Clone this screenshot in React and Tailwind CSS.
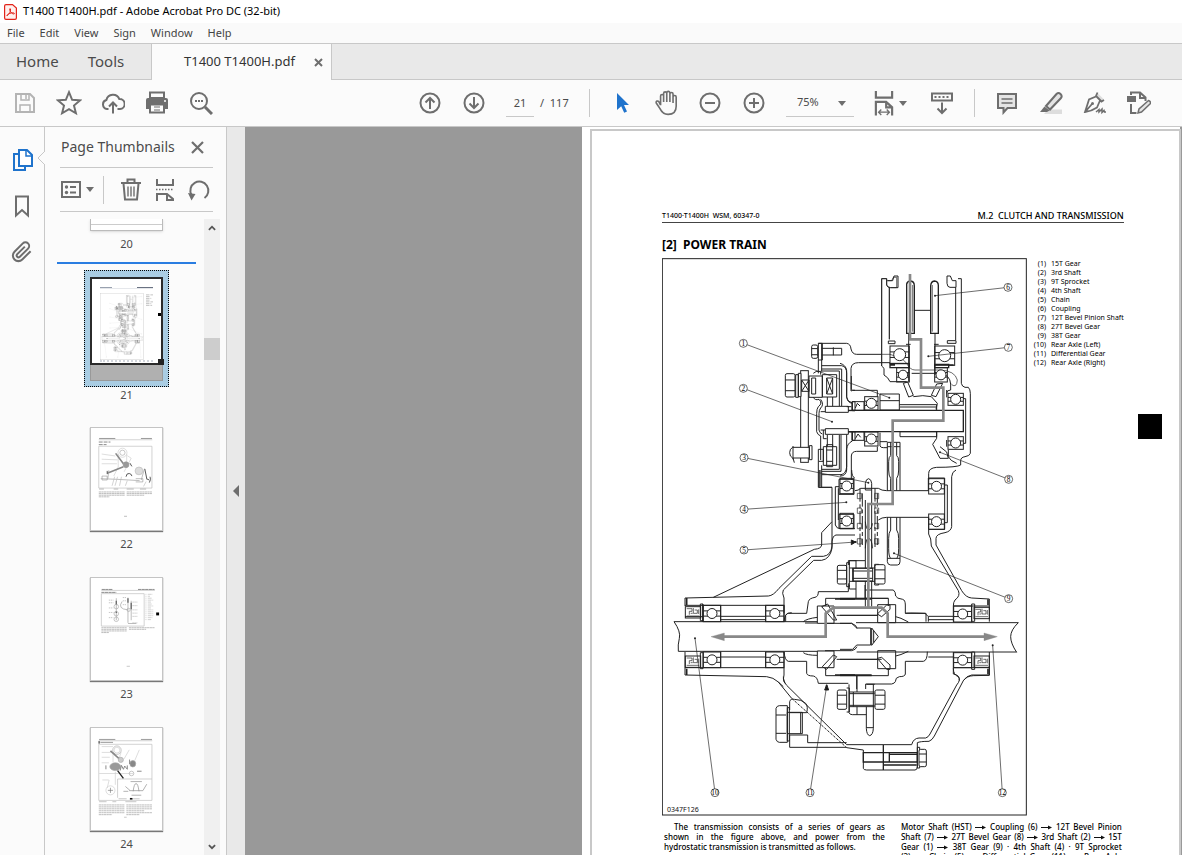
import React, { useState } from "react";

const menus = ["File", "Edit", "View", "Sign", "Window", "Help"];

const legend = [
  "15T Gear",
  "3rd Shaft",
  "9T Sprocket",
  "4th Shaft",
  "Chain",
  "Coupling",
  "12T Bevel Pinion Shaft",
  "27T Bevel Gear",
  "38T Gear",
  "Rear Axle (Left)",
  "Differential Gear",
  "Rear Axle (Right)",
];

const leftText = [
  "The transmission consists of a series of gears as",
  "shown in the figure above, and power from the",
];

// "→" is swapped for the long arrow when rendered
const rightText = [
  "Motor Shaft (HST) → Coupling (6) → 12T Bevel Pinion",
  "Shaft (7) → 27T Bevel Gear (8) → 3rd Shaft (2) → 15T",
  "Gear (1) → 38T Gear (9) · 4th Shaft (4) · 9T Sprocket",
  "(3) → Chain (5) → Differential Gear (11) → Rear Axle",
];

// Number balloons with the point each leader line ends at
const callouts = [
  { n: 1, x: 265, y: 280, tx: 703, ty: 443 },
  { n: 2, x: 265, y: 415, tx: 531, ty: 515 },
  { n: 3, x: 267, y: 623, tx: 640, ty: 698 },
  { n: 4, x: 267, y: 778, tx: 574, ty: 757 },
  { n: 5, x: 267, y: 900, tx: 602, ty: 876 },
  { n: 6, x: 1059, y: 112, tx: 840, ty: 137 },
  { n: 7, x: 1060, y: 292, tx: 820, ty: 319 },
  { n: 8, x: 1061, y: 688, tx: 855, ty: 607 },
  { n: 9, x: 1061, y: 1046, tx: 717, ty: 910 },
  { n: 10, x: 180, y: 1628, tx: 120, ty: 1165 },
  { n: 11, x: 465, y: 1628, tx: 515, ty: 1308 },
  { n: 12, x: 1042, y: 1628, tx: 1013, ty: 1186 },
];

function Icon({ size = 24, children }) {
  return (
    <svg width={size} height={size} viewBox="0 0 24 24" fill="none" stroke="#6e6e6e" strokeWidth="2" aria-hidden="true">
      {children}
    </svg>
  );
}

function ToolButton({ label, children, className = "w-11" }) {
  return (
    <button aria-label={label} className={`flex h-11 shrink-0 items-center justify-center ${className}`}>
      {children}
    </button>
  );
}

function Caret() {
  return (
    <svg width="8" height="5" viewBox="0 0 8 5" fill="#6e6e6e" aria-hidden="true">
      <path d="M0 0h8L4 5z" />
    </svg>
  );
}

function Arrow() {
  return (
    <svg className="inline-block align-middle" width="11" height="5" viewBox="0 0 11 5" aria-hidden="true">
      <path d="M0 2.5h9" stroke="#111" />
      <path d="M7 .5l4 2-4 2z" fill="#111" />
    </svg>
  );
}

function Bearing({ x, y, w = 46, h = 48, r = 15 }) {
  return (
    <g>
      <rect x={x} y={y} width={w} height={h} />
      <path d={`M${x} ${y + h * 0.34}h${w}M${x} ${y + h * 0.66}h${w}`} />
      <circle cx={x + w / 2} cy={y + h / 2} r={r} fill="#fff" />
    </g>
  );
}

function HexHead({ x, y, w = 28, h = 60 }) {
  return (
    <g fill="#fff">
      <rect x={x} y={y} width={w} height={h} rx="5" />
      <path d={`M${x} ${y + h * 0.27}h${w}M${x} ${y + h * 0.73}h${w}`} />
    </g>
  );
}

function Seal({ x, y }) {
  return (
    <g>
      <rect x={x} y={y} width="46" height="34" />
      <path
        d={`M${x + 4} ${y + 6}h16v8h-8v10M${x + 24} ${y + 4}v16h12v-10h-8M${x + 4} ${y + 28}h38M${x + 16} ${y + 20}h6M${x + 40} ${y + 8}v14`}
        strokeWidth="2"
      />
    </g>
  );
}

function PowerTrain({ className, thin }) {
  return (
    <svg
      className={className}
      viewBox="21 24 1098 1674"
      fill="none"
      stroke="#222"
      strokeWidth={thin ? 6 : 3}
      strokeOpacity={thin ? 0.45 : 1}
      role="img"
      aria-label="Power train section"
    >
      <rect x="22" y="26" width="1092" height="1669" />

      {/* clutch lever and brake, upper left */}
      <path d="M490 280H575Q587 282 588 297Q592 313 605 313H680" />
      <path d="M490 280V370M500 280V365M500 347H560Q575 350 575 370V440Q577 458 592 460V482H600" />
      <path d="M500 357H560V468M500 363H553V468" />
      <path d="M588 423V355Q590 338 610 338H705M588 423Q590 421 600 421" />
      <HexHead x={470} y={285} w={18} h={40} />
      <path d="M490 280h12v50h-12M500 295h60v20h-60M535 292v24" />
      <rect x="437" y="362" width="23" height="275" fill="#fff" />
      <HexHead x={391} y={371} w={29} h={70} />
      <path d="M422 374h8v68h-8zM430 370h8v70h-8z" fill="#fff" />
      <path d="M440 390h22v34h-22zl22 34M462 390l-22 34" />
      <path d="M462 378h40v64h-40zM470 384h12v48h-12zM502 374h43v67h-43zM515 384h18v48h-18zl18 48M533 384l-18 48M517 441v29M533 441v29" />
      <path d="M475 370q6-8 22-6v10M475 442q5 10 17 6Q504 460 490 470Q485 476 485 490V545Q488 555 497 558V630M497 448Q508 464 497 474Q492 480 492 490V540Q494 550 502 552" />
      <path d="M511 469h69v18h-69zM511 536h69v17h-69z" fill="#fff" />
      <path d="M580 482H600M497 485H511M497 540H511M505 540v26h10M580 546H592V573Q577 580 575 597V650Q573 672 558 674H500M500 664H558V555M553 555V658H500" />
      <path d="M517 555V590M533 555V590M490 598h15v36h-15zM505 590h40v56h-40zM515 584h18v66h-18zM515 600h18M515 634h18" />
      <path d="M490 634V712H531M500 646V712" />
      <path d="M495 660V710" stroke="#777" strokeWidth="6" />
      <path d="M413 592h50v32h-50q-9-4-9-16t9-16zM463 587h8v42h-8zM414 624l4 14" fill="#fff" />
      <path d="M414 588v40" />
      <path d="M592 455h8v26h-8zM592 545h8v26h-8z" />

      {/* coupling, bevel pinion and 3rd shaft */}
      <g transform="translate(555 0)">
        <path d="M125 348V86H140V105Q142 113 152 113H170V82H160L155 92H142M148 113V268M125 313H150L185 325L200 340Q210 360 225 360H300Q345 362 352 390Q350 415 335 404" strokeWidth="2" />
        <path d="M125 348V86H140V105Q142 113 152 113H174V78H162L158 92H142M148 113V268M125 348L132 355V375Q145 382 150 395H200M215 370H300Q330 374 332 402" />
        <path d="M321 78H331L337 92H348V112H330Q322 112 321 100zM347 112V270M354 86H364V400Q366 410 375 412H385Q391 418 391 430V610Q389 618 375 620Q362 622 362 632V645Q352 652 290 652Q266 654 266 670V690" />
        <path d="M200 102Q202 93 212 93Q223 94 223 108V250H200zM272 250V108Q273 94 283 93Q295 94 295 106V250z" fill="#fff" strokeWidth="4" />
        <path d="M218 105V245M277 105V245" strokeWidth="2" />
        <path d="M223 181H272M206 250V395M285 250V375M145 273h20v8h-20zM322 272h26v8h-26zM198 283h14M282 283h14" />
        <Bearing x={150} y={288} w={58} h={52} r={18} />
        <Bearing x={284} y={288} w={60} h={58} r={18} />
        <path d="M150 341h58v12h-58zM284 343h42v10h-42zM150 345h15M326 345h15" strokeWidth="4" />
        <Bearing x={170} y={353} w={38} h={43} r={14} />
        <Bearing x={284} y={353} w={38} h={43} r={15} />
        <path d="M190 400L203 396L220 436L206 441zM290 402L308 400L288 440L274 436zM220 440Q250 434 274 440L292 460L288 478" />
        <path d="M120 432H178V480H120zM120 452H178M178 464H290V480M180 471H290" />
        <path d="M34 378V418Q35 421 45 421H112V440M20 470H34M0 340Q18 345 20 362V442Q22 456 36 458" />
        <Bearing x={74} y={440} w={40} h={40} />
        <Bearing x={74} y={546} w={40} h={42} />
        <path d="M36 455h36v26h-36zM36 546h36v25h-36zM46 474l6-14l8 8M46 566l8-14l8 10" />
        <path d="M24 481H370V545H24" strokeWidth="4" />
        <Bearing x={324} y={430} w={46} h={36} />
        <Bearing x={324} y={560} w={46} h={38} />
        <path d="M320 420v22M320 590v-20M369 446h8v134h-8M320 430q0-10 12-10v-20" />
        <path d="M180 545H290V560H180zM290 545V565L278 583L300 625H325L320 606L300 590M325 600V620Q330 632 350 640" />
        <path d="M120 548V588Q122 593 130 593H142M120 575H142M34 690V618Q35 604 50 604H112V590" />
        <path d="M142 722V577H180V722M142 590h38M152 617Q146 620 146 635V660Q146 678 152 685V722M170 617Q176 620 176 635V660Q176 678 170 685V722M152 577V617M170 577V617" />
        <path d="M142 802V935Q143 945 152 945H172Q180 945 180 935V802M142 925H180M152 802V840Q146 848 146 865V895Q146 920 152 925M170 802V840Q176 848 176 865V895Q176 920 170 925" />
        <path d="M20 554V660Q18 678 0 678" />
      </g>

      {/* case wall and left axle */}
      <g transform="translate(0 660)">
        <path d="M492 0V52H531V155L500 188V225Q499 236 478 238L175 382" />
        <path d="M531 155V228Q528 256 505 259H470L372 355Q355 377 340 378L90 384V408M600 195H543Q533 197 531 215V235Q525 267 500 271H476L385 360Q380 368 387 384V430" />
        <path d="M600 25Q590 20 590 0M541 50V165Q545 176 555 176H600M541 50H552M550 55V150" />
        <path d="M552 28h45v45h-45zM552 133h45v42h-45z" />
        <path d="M57 455Q78 485 73 505T70 544M57 455H510M70 544H510" />
        <path d="M90 406H387V455M90 440H145M143 402V455M197 406V455M197 439H332M332 406V455M197 449H332M90 593H387V546M197 546V593M197 561H332M332 546V593M90 546V615L335 620Q355 622 370 636L385 650M387 593V615Q382 625 390 640" />
        <path d="M95 384V405M95 596V615" strokeWidth="5" />
        <path d="M136 402h8v50h-8zM136 548h8v48h-8z" />
        <Bearing x={145} y={406} w={52} h={49} />
        <Bearing x={332} y={406} w={55} h={49} />
        <Bearing x={145} y={546} w={52} h={47} />
        <Bearing x={332} y={546} w={55} h={47} />
        <Seal x={91} y={410} />
        <Seal x={91} y={558} />
        <path d="M387 455Q390 430 400 430H455L460 395Q462 385 480 382Q490 380 490 365H580V340M392 455V436Q395 428 410 428M387 546Q390 572 400 574H455V610Q457 618 475 618Q487 620 490 640H580" />
        <path d="M445 455Q455 446 487 442M450 459L487 459M445 548Q455 556 487 556" />
        <path d="M487 408h50v52h-50zM487 543h50v50h-50zM512 408V385H650M500 410L535 450H545L518 402zM502 590L535 555L545 560L515 598zM512 595V617H650" fill="#fff" />
        <path d="M540 387H600M540 615H600" strokeWidth="5" />
        <path d="M545 436H680M510 460H590Q606 466 606 475M545 568H680" />
        <path d="M606 530Q602 540 590 542H510" />
      </g>

      {/* chain, 4th shaft and right axle */}
      <g transform="translate(555 660)">
        <path d="M45 62Q55 62 62 55H115Q125 62 140 62H265V24H314V178H266V142H140Q125 142 115 150" />
        <path d="M60 55V238M67 70V225M105 55V238M112 70V225" strokeDasharray="40 8 12 8" />
        <path d="M52 70h12v16h-12zM104 70h12v16h-12zM52 114h12v16h-12zM104 114h12v16h-12zM52 160h12v16h-12zM104 160h12v16h-12zM52 206h12v16h-12zM104 206h12v16h-12z" strokeWidth="2" />
        <path d="M76 60V40Q78 26 86 26Q94 28 95 40V90M76 60H95M76 155Q78 178 86 180Q95 178 97 160M76 235Q77 205 86 205Q96 207 97 235M76 90V410M95 90V410" />
        <Bearing x={0} y={25} w={40} h={46} />
        <Bearing x={0} y={130} w={40} h={46} />
        <Bearing x={266} y={26} w={47} h={46} />
        <Bearing x={266} y={132} w={47} h={46} />
        <path d="M314 45H322V158H314M348 0Q336 5 335 20V170Q333 184 315 188Q288 192 288 205V225L365 362Q378 383 395 384L448 387V408M266 178V192Q274 204 274 228L355 362Q362 378 345 390Q340 396 340 408" />
        <path d="M48 270V385M25 285V272H75M75 345V385H145M75 360H160Q167 365 167 378Q170 386 188 388Q196 390 196 405V430H258V455" />
        <rect x="38" y="295" width="60" height="38" fill="#fff" />
        <path d="M38 303H98M38 325H98" />
        <path d="M113 404h54v54h-54zM113 542h54v54h-54zM112 432L140 405H150V418L125 440zM112 565L140 598H150V585L125 562z" fill="#fff" />
        <path d="M196 430Q200 428 255 430L265 440V455M196 574H250Q262 572 262 545M167 440Q180 442 205 456M167 558Q180 556 205 544M265 439H340M265 449H340M265 561H340M0 385H145V408M0 617H145V595M0 436H112M0 568H112" />
        <path d="M0 387H95M0 615H95" strokeWidth="5" />
        <path d="M0 460H35L50 474H92V525H50L38 538H0M95 474L115 500L95 526zM101 482V518" />
        <path d="M48 458H535M50 546H530M535 458Q512 480 512 500T530 547" />
        <path d="M340 408H448V455M340 408V455M340 593H448M340 546V593M395 402h9v52h-9zM395 546h9v52h-9zM448 546V615H395Q380 617 370 632M340 593V612Q360 615 358 632" />
        <path d="M444 388V405M444 596V613" strokeWidth="5" />
        <Bearing x={341} y={408} w={54} h={48} />
        <Bearing x={341} y={548} w={54} h={45} />
        <Seal x={402} y={412} />
        <Seal x={402} y={558} />
        <path d="M196 574V612Q195 620 178 620Q166 622 166 635Q164 640 155 642H77V657M50 617V657" />
      </g>

      {/* bolts through the differential case */}
      <HexHead x={547} y={946} w={28} h={56} />
      <path d="M575 938h8v72h-8zM583 945v-13h20M583 1005v12h20M583 954h76M583 994h76M595 954v40M659 943h12v62h-12z" />
      <HexHead x={660} y={944} w={30} h={58} />
      <HexHead x={547} y={1320} w={28} h={58} />
      <path d="M575 1314h8v72h-8M583 1326h76M583 1331h76M583 1366h76M583 1370h76M595 1326v44M582 1303v85q2 6 10 6h42M606 1277v49M606 1370v24M634 1303h25" />
      <path d="M634 1370V1435Q635 1455 644 1457Q654 1455 655 1435V1303M634 1433h21" />
      <HexHead x={660} y={1320} w={30} h={58} />

      {/* drain plug and lower case */}
      <g transform="translate(0 1230)">
        <path d="M385 50Q383 65 395 76L575 254H770Q775 235 792 234H812Q820 232 825 222L905 75Q918 60 910 50Q895 45 895 25" />
        <path d="M370 66L410 115M575 263L625 270V325Q626 330 635 330H780Q787 330 787 320V248Q795 244 822 244Q832 240 838 228L925 62Q935 48 955 47L1003 46V20" />
        <path d="M410 115L575 263" strokeDasharray="8 4" />
        <path d="M404 262H575M404 262V225M404 150V125Q406 115 418 118Q440 118 452 130Q460 140 455 158H404M458 225V248H575M404 225H458" />
        <path d="M363 145q3-8 10-8h24v110h-24q-7 0-10-9zM363 165h30M363 220h30M397 143h6v100h-6zM397 157h45v64h-45zM437 157v64" />
        <path d="M625 278h78v28h-78zM685 255v75M703 278h84v28h-84zM703 283h84M685 315h100" strokeWidth="4" />
        <path d="M787 262h7v62h-7z" />
        <HexHead x={792} y={268} w={22} h={52} />
      </g>

      {/* power flow */}
      <g stroke="#888" strokeWidth="8">
        <path d="M765 72V268H798V413H865V512H713V762H640V1073" />
        <path d="M205 1160H512V1090L535 1073H680L698 1090V1160H990" />
        <path d="M168 1160L208 1149V1172zM1027 1160L987 1149V1172z" fill="#888" strokeWidth="1" />
      </g>
      <path d="M602 876l-13-6v14zM515 1304l-6 16h12z" fill="#111" />

      {callouts.map((c) => (
        <g key={c.n}>
          <path d={`M${c.x} ${c.y}L${c.tx} ${c.ty}`} strokeWidth="2" />
          <circle cx={c.tx} cy={c.ty} r="3" fill="#222" stroke="none" />
          <circle cx={c.x} cy={c.y} r="12" fill="#fff" strokeWidth="2" />
          {!thin && (
            <text
              x={c.x}
              y={c.y + 8}
              textAnchor="middle"
              fontSize="22"
              fontFamily="Liberation Serif, serif"
              fill="#000"
              stroke="none"
            >
              {c.n}
            </text>
          )}
        </g>
      ))}
      {!thin && (
        <text x="36" y="1686" fontSize="21" fontFamily="Noto Sans, sans-serif" fill="#111" stroke="none">
          0347F126
        </text>
      )}
    </svg>
  );
}

// Miniature pages
function Mini21() {
  return (
    <div className="relative h-full w-full">
      <div className="flex h-[88px] flex-col border-2 border-[#2b2b2b] bg-white px-2 pt-2">
        <div className="flex justify-between border-b border-gray-200">
          <span className="h-px w-3 bg-gray-400" />
          <span className="h-px w-4 bg-gray-500" />
        </div>
        <div className="flex gap-0.5 pt-1">
          <PowerTrain thin className="h-[67px] w-11 shrink-0" />
          <svg className="h-4 w-2" viewBox="0 0 8 16" stroke="#bbb" strokeDasharray="4 1" aria-hidden="true">
            <path d="M0 1h8M0 3h5M0 5h6M0 7h4M0 9h8M0 11h6M0 13h7" />
          </svg>
        </div>
        <div className="h-0.5 border-t-2 border-dotted border-gray-300" />
      </div>
      <div className="h-4 border border-t-0 border-[#999] bg-[#b0b0b0]" />
      <span className="absolute top-9 right-0.5 h-[3px] w-[3px] bg-black" />
      <span className="absolute -right-px bottom-[15px] h-1.5 w-1.5 bg-[#222]" />
    </div>
  );
}

function Mini22() {
  return (
    <svg className="h-full w-full" viewBox="270 81 219 312" fill="none" stroke="#999" strokeWidth="2" aria-hidden="true">
      <path d="M295 112H345M424 112H458" stroke="#999" strokeWidth="3" />
      <path d="M294 116H459M294 136H458V265H294z" stroke="#bbb" />
      <path d="M294 123H330M294 131H318" stroke="#888" strokeWidth="3" strokeDasharray="12 3" />
      <circle cx="367" cy="156" r="14" stroke="#ccc" />
      <circle cx="367" cy="156" r="8" stroke="#aaa" />
      <path d="M354 160V200L340 228M380 160V190M382 165L394 173L372 215M303 160L345 166M303 176L352 178M303 190H350" stroke="#ccc" />
      <path d="M346 158L370 190M320 219L370 199" stroke="#888" strokeWidth="5" />
      <circle cx="378" cy="193" r="9" fill="#999" />
      <path d="M300 236L350 238L420 242M304 228h16v12h-16zM408 236h22v10h-22M325 210L322 236M435 205L425 240" />
      <circle cx="418" cy="212" r="12" fill="#ddd" stroke="#bbb" />
      <path d="M320 212v10M390 188l6 10M378 230q2-12 10-10t8 8M436 206l6 30M452 230q4 8-2 18M440 236l10 4" stroke="#555" strokeWidth="3" />
      <path d="M343 230l-8 28M352 230l-8 28M364 230l-6 28M382 242l-6 16M440 245l-8 15" stroke="#bbb" />
      <path d="M295 268H310M340 268H354M380 268H402M421 268H440" />
      <path d="M294 277H375M294 282H375M294 287H375M294 292H327M380 277H458M380 282H458M380 287H434" strokeDasharray="7 1" />
      <path d="M372 352H381" />
    </svg>
  );
}

function Mini23() {
  return (
    <svg className="h-full w-full" viewBox="270 531 219 312" fill="none" stroke="#aaa" strokeWidth="2" aria-hidden="true">
      <path d="M303 565H337M415 565H466M302 574H348" stroke="#888" strokeWidth="3" strokeDasharray="10 1" />
      <path d="M302 568H467M302 578H434V678H302z" stroke="#bbb" />
      <path d="M348 592V660M384 590V668M366 602Q350 625 384 628M394 600V660M384 670H410" stroke="#999" />
      <path d="M348 600V612M384 592V606M348 632v6M394 606v20" stroke="#666" strokeWidth="4" />
      <circle cx="348" cy="618" r="7" />
      <circle cx="348" cy="640" r="7" />
      <circle cx="348" cy="657" r="7" />
      <circle cx="386" cy="628" r="5" />
      <path d="M325 598h14M325 606h14M325 622h14M325 636h14M325 652h14M368 590h12M368 600h12M368 612h12M398 604h15M398 615h15M398 628h15M398 638h15M398 648h15M398 668h15" strokeDasharray="4 2" />
      <path d="M438 580H460M438 586H452M438 592H458M438 598H462M438 604H455M438 610H458M438 616H462M438 622H455M438 628H464M438 634H464M438 640H462M438 646H466M438 652H460M438 658H455" strokeDasharray="3 4 12 2" stroke="#bbb" />
      <path d="M302 683H380M302 688H380M302 693H380M302 698H325M387 683H466M387 688H440" strokeDasharray="7 1" stroke="#999" />
      <path d="M471 636h9v9h-9z" fill="#000" stroke="none" />
      <path d="M380 802H390" />
    </svg>
  );
}

function Mini24() {
  return (
    <svg className="h-full w-full" viewBox="270 306 219 312" fill="none" stroke="#aaa" strokeWidth="2" aria-hidden="true">
      <path d="M295 340H345M424 340H458M299 349H338" stroke="#999" strokeWidth="3" />
      <path d="M295 345V353" stroke="#111" strokeWidth="3" />
      <path d="M294 344H459M294 355H458V528H294zM352 462H458M352 462V520" stroke="#bbb" />
      <circle cx="350" cy="373" r="13" />
      <circle cx="350" cy="373" r="9" stroke="#ccc" />
      <path d="M338 380V410M363 378L355 405M388 372L372 400M419 372L405 405M303 362h35M303 380h28M303 395h25M303 412h22M295 445H400M326 465L320 490M345 440V480M305 465H325" stroke="#ccc" />
      <path d="M330 375L360 402" stroke="#888" strokeWidth="5" />
      <circle cx="362" cy="403" r="8" fill="#ccc" />
      <ellipse cx="345" cy="424" rx="17" ry="12" fill="#999" />
      <ellipse cx="399" cy="415" rx="9" ry="10" fill="#888" />
      <path d="M360 436l4-16l6 12l4-10l8 10v-12M316 420v12M389 402v14M412 438h14" stroke="#888" strokeWidth="3" />
      <path d="M352 436L370 460" stroke="#222" strokeWidth="4" />
      <circle cx="395" cy="445" r="7" />
      <circle cx="330" cy="497" r="14" stroke="#ccc" />
      <path d="M322 497h16M330 489v16" stroke="#777" />
      <path d="M400 500Q403 476 409 476T418 500M388 498H430M376 485L390 497M442 478L430 498M392 470H427M395 512H425M370 500H385" stroke="#888" />
      <path d="M390 523h8" stroke="#111" strokeWidth="5" />
      <path d="M355 523h25M400 523h20M295 532H318M336 532H348M376 532H410" />
      <path d="M294 542H373M294 548H373M294 554H373M294 560H373M294 566H373M294 572H335M379 542H458M379 548H458M379 554H458M379 560H435M379 566H458M379 572H420" strokeDasharray="7 1" stroke="#999" />
      <path d="M372 580H380" />
    </svg>
  );
}

const pages = [
  { n: 22, Mini: Mini22 },
  { n: 23, Mini: Mini23 },
  { n: 24, Mini: Mini24 },
];

function TopBars() {
  return (
    <header className="shrink-0">
      <div className="flex h-[23px] items-center gap-1.5 bg-white pl-1 text-[11px] text-black">
        <svg width="13" height="16" viewBox="0 0 13 16" fill="none" stroke="#e2231a" aria-hidden="true">
          <path d="M2 .6h6.5L12.4 4v10q0 1.4-1.4 1.4H2Q.6 15.400.6 14V2Q.6.6 2 .6z" fill="#fff0ee" strokeWidth="1.2" />
          <path d="M3 11.500c2-1 4-4 3.500-6.500c-.5-1-1.200 0-.6 1.500c.7 2 2.500 3.500 4 3.500c1 0 .6-1.200-1-1.200c-2 0-4.500 1-5.600 2.200c-.6.8-.6 1-.3.5z" />
        </svg>
        <h1>T1400 T1400H.pdf - Adobe Acrobat Pro DC (32-bit)</h1>
      </div>
      <nav aria-label="Menu" className="flex h-5 items-center gap-[15px] bg-[#fafafa] pl-[7px] text-[11px] text-[#444]">
        {menus.map((m) => (
          <button key={m}>{m}</button>
        ))}
      </nav>
      <div className="flex h-[37px] border-t border-[#c8c8c8] bg-[#e9e9e9] text-[#4b4b4b]">
        <div className="flex w-[151px] items-center gap-[29px] border-b border-[#c8c8c8] pl-4 text-[15px]">
          <button>Home</button>
          <button>Tools</button>
        </div>
        <div className="flex w-[181px] items-center justify-between border-x border-[#c8c8c8] bg-[#fbfbfb] pr-2 pl-8 text-[13px] text-[#333]">
          <span>T1400 T1400H.pdf</span>
          <button aria-label="Close tab">
            <svg width="9" height="9" viewBox="0 0 9 9" stroke="#6e6e6e" strokeWidth="2" aria-hidden="true">
              <path d="M1 1l7 7M8 1L1 8" />
            </svg>
          </button>
        </div>
        <div className="flex-1 border-b border-[#c8c8c8]" />
      </div>
    </header>
  );
}

function Toolbar() {
  const [page, setPage] = useState("21");
  const [zoom, setZoom] = useState("75%");

  return (
    <div className="flex h-[47px] shrink-0 items-center border-b border-[#c8c8c8] bg-[#fbfbfb] pr-[21px] pl-[3px] text-xs text-[#4b4b4b]">
      <ToolButton label="Save">
        <Icon>
          <path d="M3 3h14l4 4v14H3z" stroke="#b4b4b4" />
          <path d="M8 3v6h8V3M13 4v4M7 21v-7h10v7" stroke="#b4b4b4" strokeWidth="1.5" />
        </Icon>
      </ToolButton>
      <ToolButton label="Star">
        <Icon size={26}>
          <path d="M12 2l2.900 7 7.400.5-5.700 4.800 1.800 7.200L12 17.600l-6.400 3.900 1.800-7.200L1.700 9.500 9.100 9z" strokeWidth="1.8" />
        </Icon>
      </ToolButton>
      <ToolButton label="Share">
        <Icon>
          <path d="M7.500 18H6a4.600 4.600 0 0 1-.6-9A6.800 6.800 0 0 1 18.300 8a5 5 0 0 1 .7 10h-2.500M12 22.500V12M8 15.500l4-4 4 4" />
        </Icon>
      </ToolButton>
      <ToolButton label="Print">
        <Icon>
          <path d="M5 1.500h14V7H5z" fill="#fbfbfb" />
          <path d="M3 7h18q2 0 2 2v9H1V9q0-2 2-2z" fill="#6e6e6e" stroke="none" />
          <path d="M5 13.500h14v8H5z" fill="#fbfbfb" />
          <path d="M9 16h6M9 19h6" strokeWidth="1.2" />
          <path d="M19 10h2" stroke="#fff" strokeWidth="1.5" />
        </Icon>
      </ToolButton>
      <ToolButton label="Find">
        <Icon>
          <circle cx="10" cy="10" r="8" />
          <path d="M16 16l7 7" strokeWidth="3" />
          <path d="M6 10h8" strokeDasharray="2 1" />
        </Icon>
      </ToolButton>
      <div className="flex-1" />
      <ToolButton label="Previous page">
        <Icon>
          <circle cx="12" cy="12" r="9.5" />
          <path d="M12 18V7M7.500 11.500L12 7l4.500 4.500" />
        </Icon>
      </ToolButton>
      <ToolButton label="Next page">
        <Icon>
          <circle cx="12" cy="12" r="9.5" />
          <path d="M12 6v11M7.500 12.500L12 17l4.500-4.500" />
        </Icon>
      </ToolButton>
      <input
        aria-label="Page number"
        value={page}
        onChange={(e) => setPage(e.target.value)}
        className="ml-2.5 h-7 w-7 border-b border-[#c8c8c8] bg-transparent text-center text-[11px] outline-none"
      />
      <span className="ml-1.5 w-[49px] text-[11px] whitespace-pre">/  117</span>
      <div className="h-7 w-px bg-[#c8c8c8]" />
      <ToolButton label="Select" className="ml-2.5 w-11">
        <Icon>
          <path d="M7 2l12 12h-5l3 6.500-2.800 1.200-3-6.500L7 19z" fill="#1f73cc" stroke="none" />
        </Icon>
      </ToolButton>
      <ToolButton label="Hand">
        <Icon size={26}>
          <path
            d="M7 14V5.500a1.400 1.400 0 0 1 2.800 0V11M9.800 11V3.200a1.400 1.400 0 0 1 2.900 0V11M12.700 10V2.700a1.400 1.400 0 0 1 2.900 0V11M15.600 10V3.700a1.400 1.400 0 0 1 2.900 0V12M18.500 11V6.500a1.400 1.400 0 0 1 2.900 0V15c0 5-3 7.500-7.500 7.500c-4 0-5.900-2-7.600-5.500L3 12c-.7-1.800 1.500-2.500 2.500-1L7 14"
            strokeWidth="1.5"
          />
        </Icon>
      </ToolButton>
      <ToolButton label="Zoom out">
        <Icon>
          <circle cx="12" cy="12" r="9.5" />
          <path d="M7 12h10" />
        </Icon>
      </ToolButton>
      <ToolButton label="Zoom in">
        <Icon>
          <circle cx="12" cy="12" r="9.5" />
          <path d="M7 12h10M12 7v10" />
        </Icon>
      </ToolButton>
      <div className="relative ml-2.5 flex items-center">
        <select
          aria-label="Zoom"
          value={zoom}
          onChange={(e) => setZoom(e.target.value)}
          className="h-7 w-[68px] appearance-none border-b border-[#c8c8c8] bg-transparent pl-[11px] text-[11px] outline-none"
        >
          <option>75%</option>
          <option>100%</option>
        </select>
        <span className="pointer-events-none absolute right-2">
          <Caret />
        </span>
      </div>
      <ToolButton label="Fit width" className="ml-2.5 w-[50px] gap-0.5">
        <Icon size={26}>
          <path d="M4.500 1v6h15V1M4.500 23.500V11H14l5.500 5v7.500M14 11v5h5.500" />
          <path d="M7 20.500h10M9.500 18L7 20.500 9.500 23M14.500 18l2.500 2.500-2.500 2.500" strokeWidth="1.2" />
        </Icon>
        <Caret />
      </ToolButton>
      <ToolButton label="Scrolling" className="ml-1.5 w-11">
        <Icon>
          <path d="M2 2.500h20v7H2z" />
          <path d="M4.500 6h15" strokeDasharray="2 2" />
          <path d="M12 11.500V22M7.500 17.500L12 22l4.500-4.500" />
        </Icon>
      </ToolButton>
      <div className="ml-2.5 h-7 w-px bg-[#c8c8c8]" />
      <ToolButton label="Comment" className="ml-2.5 w-11">
        <Icon>
          <path d="M3 3h18v14h-8.500L8.500 21.500V17H3z" fill="#e4e4e4" />
          <path d="M6.500 8h11M6.500 12h11" strokeWidth="1.5" />
        </Icon>
      </ToolButton>
      <ToolButton label="Highlight">
        <Icon>
          <path d="M9 18.500h14v4.500H5z" fill="#ddd" stroke="none" />
          <path d="M7 15L17.500 3q2-2 4 0t.5 4L11 18.500z" fill="#e4e4e4" />
          <path d="M5.500 15.500l5 4-2.500 1.500H1z" fill="#6e6e6e" stroke="none" />
        </Icon>
      </ToolButton>
      <ToolButton label="Sign">
        <Icon>
          <path d="M14.500 2l6.500 6.500-4 2-4-5z" fill="#ddd" stroke="none" />
          <path d="M14.500 1.500L13 5l5.500 5.500L21 9M13 5.500L6 8.500Q4 15 2 21q6-.5 12-4.500l3-7M2 21l7-8" strokeWidth="1.8" />
          <circle cx="9.5" cy="12.5" r="1.5" fill="#6e6e6e" stroke="none" />
          <path d="M13 21l3-2.500v2.500l3-3v3.500l2-2 .5 1.500H23" strokeWidth="1.5" />
        </Icon>
      </ToolButton>
      <ToolButton label="Edit">
        <Icon>
          <path d="M4 4V1.500h9l5.500 5V10M13 2v5h5.500M4 13v9h5.500" />
          <path d="M0 5h9v6H0z" fill="#6e6e6e" stroke="none" />
          <path d="M11 22l1-4 9.500-8.500q2.500 1 2 3L14.500 21z" fill="#e4e4e4" strokeWidth="1.5" />
        </Icon>
      </ToolButton>
    </div>
  );
}

function Rail() {
  return (
    <div className="relative flex w-[45px] shrink-0 flex-col items-center gap-[22px] border-r border-[#c8c8c8] bg-[#fbfbfb] pt-[21px]">
      <button aria-label="Page thumbnails">
        <svg width="24" height="24" viewBox="-2 0 24 24" fill="none" stroke="#1f73cc" strokeWidth="2" aria-hidden="true">
          <path d="M7 6H2v16h11v-4" />
          <path d="M7 2h8l5 5v11H7z" fill="#fff" />
          <path d="M14 2v6h6" strokeWidth="1.5" />
        </svg>
      </button>
      <button aria-label="Bookmarks">
        <svg width="22" height="25" viewBox="0 0 22 25" fill="none" stroke="#6e6e6e" strokeWidth="2" aria-hidden="true">
          <path d="M5 2.500h12v19l-6-5.500-6 5.500z" />
        </svg>
      </button>
      <button aria-label="Attachments">
        <svg width="22" height="22" viewBox="0 0 24 24" fill="none" stroke="#6e6e6e" strokeWidth="2.2" aria-hidden="true">
          <path d="M21.400 11.100l-9.100 9.100a6 6 0 0 1-8.500-8.500l9.100-9.100a4 4 0 0 1 5.700 5.700l-9.200 9.100a2 2 0 0 1-2.800-2.800l8.500-8.500" />
        </svg>
      </button>
      <svg className="absolute top-6 -right-px" width="8" height="14" viewBox="0 0 8 14" fill="#fbfbfb" stroke="#c8c8c8" aria-hidden="true">
        <path d="M8 0L1 7l7 7" />
      </svg>
    </div>
  );
}

function Thumbnails() {
  return (
    <aside className="flex w-[182px] shrink-0 flex-col border-r border-[#c8c8c8] bg-[#fbfbfb] text-[#4b4b4b]">
      <div className="mr-[13px] ml-[15px] flex h-[41px] items-center justify-between border-b border-[#c8c8c8] pr-[9px] pl-px">
        <h2 className="text-sm">Page Thumbnails</h2>
        <button aria-label="Close panel">
          <svg width="13" height="13" viewBox="0 0 13 13" stroke="#6e6e6e" strokeWidth="2.2" aria-hidden="true">
            <path d="M1 1l11 11M12 1L1 12" />
          </svg>
        </button>
      </div>
      <div className="mr-[13px] ml-[15px] flex h-11 shrink-0 items-center border-b border-[#c8c8c8]">
        <button aria-label="Options" className="flex items-center gap-1">
          <svg width="22" height="22" viewBox="0 0 22 22" fill="none" stroke="#6e6e6e" strokeWidth="2" aria-hidden="true">
            <path d="M2 3h18v15H2z" />
            <path d="M10 8h6M10 13.500h6" />
            <circle cx="6.5" cy="8" r="1.7" fill="#6e6e6e" stroke="none" />
            <circle cx="6.5" cy="13.5" r="1.7" fill="#6e6e6e" stroke="none" />
          </svg>
          <Caret />
        </button>
        <div className="ml-[9px] h-7 w-px bg-[#c8c8c8]" />
        <div className="flex flex-1 justify-between pr-0.5 pl-[15px]">
          <button aria-label="Delete pages">
            <Icon>
              <path d="M2 5h20M8.500 4.500V1.500h7v3M4.500 5.500l1.500 16h12l1.500-16" />
              <path d="M9 8.500v10M12 8.500v10M15 8.500v10" strokeWidth="1.4" />
            </Icon>
          </button>
          <button aria-label="Split pages">
            <Icon>
              <path d="M4 1v6h16V1M4 23v-7h10l6 5v2M14 16v6h6" />
              <path d="M3 11.500h18" strokeDasharray="1.5 1.5" strokeWidth="1.5" />
            </Icon>
          </button>
          <button aria-label="Rotate pages">
            <Icon>
              <path d="M4.500 17A9 9 0 1 1 17.500 20" />
              <path d="M1 15l7.500 1-4 6.500z" fill="#6e6e6e" stroke="none" />
            </Icon>
          </button>
        </div>
      </div>

      <div className="mt-[7px] flex min-h-0 flex-1 pr-1.5">
        <div className="flex min-h-0 flex-1 flex-col items-center overflow-hidden pl-1 text-[11px] leading-4">
          <div className="h-3 w-[73px] shrink-0 border-x border-b border-[#bbb] bg-white shadow">
            <div className="h-1.5 border-b border-[#ccc]" />
          </div>
          <span className="mt-[5px]">20</span>
          <div className="mt-2.5 h-0.5 w-[139px] shrink-0 bg-[#2a7de1]" />
          <button aria-label="Page 21" className="mt-1.5 h-[117px] w-[85px] shrink-0 border border-dotted border-black bg-[#aacde3] px-[5px] pt-1.5 pb-1.5">
            <Mini21 />
          </button>
          <span>21</span>
          <div className="flex flex-col items-center gap-[25px] pt-6">
            {pages.map(({ n, Mini }) => (
              <div key={n} className="flex flex-col items-center gap-[5px]">
                <button aria-label={`Page ${n}`} className="h-[104px] w-[73px] border border-[#c4c4c4] bg-white shadow-[0_1px_1px_#777]">
                  <Mini />
                </button>
                <span>{n}</span>
              </div>
            ))}
          </div>
        </div>
        <div className="flex w-4 shrink-0 flex-col items-center bg-[#f0f0f0] py-1">
          <svg width="8" height="10" viewBox="0 0 9 10" fill="none" stroke="#555" strokeWidth="2" aria-hidden="true">
            <path d="M1 7l3.500-3.500L8 7" />
          </svg>
          <div className="mt-[105px] h-[22px] w-full bg-[#cdcdcd]" />
          <svg className="mt-auto" width="8" height="10" viewBox="0 0 9 10" fill="none" stroke="#555" strokeWidth="2" aria-hidden="true">
            <path d="M1 4l3.500 3.500L8 4" />
          </svg>
        </div>
      </div>
    </aside>
  );
}

function DocumentPage() {
  return (
    <article className="relative flex-1 border-2 border-b-0 border-[#c8c8c8] bg-white pt-[79px] pr-[55px] pl-[70px] text-black">
      <div className="flex h-[13px] items-center justify-between border-b border-[#444] font-medium whitespace-nowrap">
        <span className="text-[7px]">T1400·T1400H&nbsp; WSM, 60347-0</span>
        <span className="text-[9px]">M.2&nbsp; CLUTCH AND TRANSMISSION</span>
      </div>
      <h2 className="mt-3.5 text-xs leading-4 font-bold">[2]&nbsp; POWER TRAIN</h2>
      <div className="mt-[5px] flex items-start gap-1">
        <PowerTrain className="h-[558px] w-[366px] shrink-0" />
        <ol className="pt-px text-[7px] leading-[9px] whitespace-nowrap">
          {legend.map((name, i) => (
            <li key={name} className="flex gap-[5px]">
              <span className="w-3.5 text-right">({i + 1})</span>
              <span>{name}</span>
            </li>
          ))}
        </ol>
      </div>
      <div className="mt-1.5 grid grid-cols-2 gap-4 px-0.5 text-[8px] leading-[10px] font-medium whitespace-nowrap">
        <div>
          <p className="pl-2.5 [text-align-last:justify]">{leftText[0]}</p>
          <p className="[text-align-last:justify]">{leftText[1]}</p>
          <p>hydrostatic transmission is transmitted as follows.</p>
        </div>
        <div>
          {rightText.map((line) => (
            <p key={line} className="h-[10px] [text-align-last:justify]">
              {line.split("→").map((part, i) => (
                <React.Fragment key={i}>
                  {i > 0 && <Arrow />}
                  {part}
                </React.Fragment>
              ))}
            </p>
          ))}
        </div>
      </div>
      <span className="absolute top-[283px] right-[17px] h-[25px] w-6 bg-black" />
    </article>
  );
}

export default function App() {
  return (
    <div className="flex h-screen flex-col overflow-hidden bg-white font-['Noto_Sans',sans-serif]">
      <TopBars />
      <Toolbar />
      <div className="flex min-h-0 flex-1">
        <Rail />
        <Thumbnails />
        <button aria-label="Hide panel" className="flex w-[18px] shrink-0 items-center justify-center bg-[#e9e9e9]">
          <svg width="6" height="12" viewBox="0 0 6 12" fill="#6e6e6e" aria-hidden="true">
            <path d="M6 0v12L0 6z" />
          </svg>
        </button>
        <main className="flex min-w-0 flex-1 overflow-hidden bg-[#999]">
          <div className="flex-1" />
          <div className="flex w-[600px] shrink-0 border-r-2 border-[#999] bg-white pt-0.5 pl-2">
            <DocumentPage />
          </div>
        </main>
      </div>
    </div>
  );
}
